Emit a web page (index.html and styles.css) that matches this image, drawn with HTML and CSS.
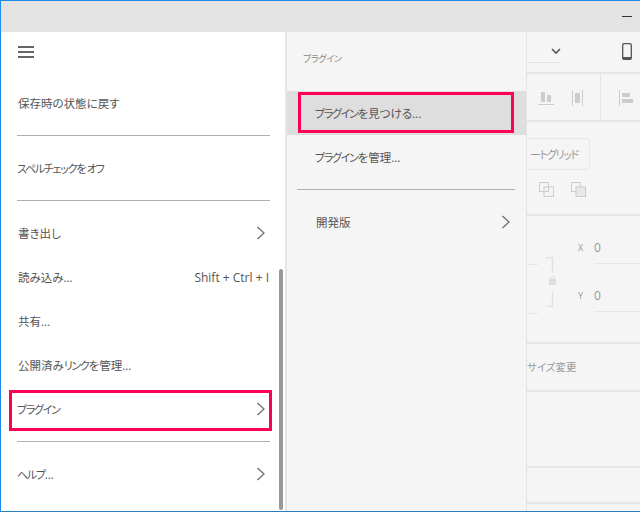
FILE: index.html
```html
<!DOCTYPE html>
<html lang="ja">
<head>
  <meta charset="UTF-8" />
  <title>プラグイン</title>
  <link rel="stylesheet" href="styles.css">
</head>
<body>
  <div class="window">
    <div class="titlebar"><span class="minimize"></span></div>

    <div class="main">
      <!-- main menu -->
      <div class="menu">
        <div class="burger">
          <svg width="16" height="12" viewBox="0 0 16 12"><path d="M0 1h16M0 6h16M0 11h16" stroke="#666" stroke-width="2"/></svg>
        </div>
        <div class="group first">
          <div class="item"><span>保存時の状態に戻す</span></div>
        </div>
        <div class="group">
          <div class="item"><span class="pull"><span class="kana">スペルチェック</span>を<span class="kana">オフ</span></span></div>
        </div>
        <div class="group">
          <div class="item"><span>書き出し</span> <svg class="arrow" width="9" height="14" viewBox="0 0 9 14"><path d="M1.500 1l6.500 6-6.500 6" fill="none" stroke="#777" stroke-width="1.500"/></svg></div>
          <div class="item"><span>読み込み<span class="dots">...</span></span> <span class="shortcut">Shift + Ctrl + I</span></div>
          <div class="item"><span>共有<span class="dots">...</span></span></div>
          <div class="item"><span>公開済み<span class="kana">リンク</span>を管理<span class="dots">...</span></span></div>
          <div class="item marked"><span class="kana pull">プラグイン</span> <svg class="arrow" width="9" height="14" viewBox="0 0 9 14"><path d="M1.500 1l6.500 6-6.500 6" fill="none" stroke="#777" stroke-width="1.500"/></svg></div>
        </div>
        <div class="group last">
          <div class="item"><span class="pull"><span class="kana">ヘルプ</span><span class="dots">...</span></span> <svg class="arrow" width="9" height="14" viewBox="0 0 9 14"><path d="M1.500 1l6.500 6-6.500 6" fill="none" stroke="#777" stroke-width="1.500"/></svg></div>
        </div>
        <div class="scrollbar"></div>
      </div>

      <!-- plugin submenu -->
      <div class="submenu">
        <div class="sub-title">プラグイン</div>
        <div class="sub-item active"><span><span class="kana">プラグイン</span>を見つける<span class="dots">...</span></span></div>
        <div class="sub-item"><span><span class="kana">プラグイン</span>を管理<span class="dots">...</span></span></div>
        <div class="sub-sep"></div>
        <div class="sub-item dev"><span>開発版</span> <svg class="arrow" width="9" height="14" viewBox="0 0 9 14"><path d="M1.500 1l6.500 6-6.500 6" fill="none" stroke="#777" stroke-width="1.500"/></svg></div>
      </div>

      <!-- property panel behind the menu -->
      <div class="panel">
        <div class="sec sec-top">
          <div class="select">
            <svg width="10" height="7" viewBox="0 0 10 7"><path d="M1 1l4 4 4-4" fill="none" stroke="#555" stroke-width="1.600"/></svg>
          </div>
          <svg class="phone" width="10" height="17" viewBox="0 0 10 17"><rect x="0.700" y="0.700" width="8.600" height="15.600" rx="1.200" fill="none" stroke="#555" stroke-width="1.300"/><path d="M1 14h8v2H1z" fill="#555"/></svg>
        </div>
        <div class="sec sec-align">
          <div class="align-left">
            <svg width="16" height="16" viewBox="0 0 16 16"><path d="M0 14.500h16" stroke="#ccc"/><path d="M3 2h4v10H3zM9 5h4v7H9z" fill="#ccc"/></svg>
            <svg width="11" height="16" viewBox="0 0 11 16"><path d="M.5 0v16M10.500 0v16" stroke="#ccc"/><path d="M3 3h5v10H3z" fill="#ccc"/></svg>
          </div>
          <div class="align-right">
            <svg width="14" height="16" viewBox="0 0 14 16"><path d="M.5 0v16" stroke="#ccc"/><path d="M3 3h8v4H3zM3 9h11v4H3z" fill="#ccc"/></svg>
          </div>
        </div>
        <div class="sec sec-grid">
          <div class="grid-btn"><span class="kana">ートグリッド</span></div>
          <div class="bool-icons">
            <svg width="15" height="15" viewBox="0 0 15 15"><rect x=".5" y=".5" width="9" height="9" fill="none" stroke="#ccc"/><rect x="5" y="5" width="9.500" height="9.500" fill="none" stroke="#ccc"/></svg>
            <svg width="15" height="15" viewBox="0 0 15 15"><rect x=".5" y=".5" width="9" height="9" fill="none" stroke="#ccc"/><rect x="5" y="5" width="9.500" height="9.500" fill="#e8e8e8" stroke="#ccc"/></svg>
          </div>
        </div>
        <div class="sec sec-pos">
          <div class="pos-lines">
            <div class="stub"></div>
            <div class="stub"></div>
          </div>
          <svg class="lock" width="12" height="50" viewBox="0 0 12 50"><path d="M0 .5h6.500V16M6.500 34v15.500H0" fill="none" stroke="#e2e2e2" stroke-width="1.500"/><path d="M3 22h7v6H3z" fill="#ddd"/><path d="M4.500 22v-2h4v2" fill="none" stroke="#ddd"/></svg>
          <div class="pos-fields">
            <div class="field"><span class="axis">X</span><span class="val">0</span></div>
            <div class="field"><span class="axis">Y</span><span class="val">0</span></div>
          </div>
        </div>
        <div class="sec sec-resize">サイズ変更</div>
        <div class="sec sec-a"></div>
        <div class="sec sec-b"></div>
      </div>
    </div>
  </div>
</body>
</html>
```

FILE: styles.css
```css
html, body {
  margin: 0;
  padding: 0;
}

body {
  width: 640px;
  height: 512px;
  overflow: hidden;
  font-family: "Noto Sans CJK JP", "Open Sans", sans-serif;
  font-feature-settings: "palt";
  font-size: 11.5px;
  color: #555;
}

.kana {
  font-size: 11px;
  letter-spacing: -1.3px;
}

.dots {
  font-size: 11px;
  letter-spacing: 0;
}

.pull {
  margin-left: -1px;
}

.window {
  width: 639px;
  height: 510px;
  border-top: 1px solid #1e8ae6;
  border-left: 1px solid #1e8ae6;
  border-bottom: 1px solid #2a7fc0;
  background-color: #f5f5f5;
  display: flex;
  flex-direction: column;
}

.titlebar {
  height: 31px;
  flex: none;
  background-color: #e3e3e3;
  display: flex;
  justify-content: flex-end;
  align-items: center;
  padding-right: 8px;
}

.minimize {
  width: 10px;
  height: 1px;
  background-color: #333;
}

.main {
  flex: 1;
  display: flex;
  min-height: 0;
}

/* ---- left menu ---- */
.menu {
  position: relative;
  width: 284px;
  flex: none;
  background-color: #fff;
  border-right: 2px solid #e6e6e6;
}

.burger {
  height: 39px;
  padding: 14px 0 0 17px;
  line-height: 0;
}

.group {
  margin: 0 15px 0 16px;
  border-bottom: 1px solid #b0b0b0;
  padding: 10px 0;
}

.group.first {
  margin-top: -14px;
}

.group.last {
  border-bottom: none;
}

.item {
  position: relative;
  height: 44px;
  display: flex;
  align-items: center;
  justify-content: space-between;
  padding: 0 5px 0 1px;
}

.marked::after {
  content: "";
  position: absolute;
  left: -8px;
  right: -2px;
  top: 3px;
  bottom: 0;
  border: 3px solid #ff0057;
}

.shortcut {
  font-family: "Open Sans", sans-serif;
  font-size: 12px;
  margin-right: -4px;
}

.arrow {
  flex: none;
}

.scrollbar {
  position: absolute;
  right: 2px;
  top: 237px;
  bottom: 1px;
  width: 4px;
  border-radius: 2px;
  background-color: #999;
}

/* ---- plugin submenu ---- */
.submenu {
  width: 239px;
  flex: none;
  background-color: #f5f5f5;
  border-right: 1px solid #e4e4e4;
}

.sub-title {
  height: 59px;
  padding: 20px 0 0 16px;
  box-sizing: border-box;
  font-size: 9px;
  line-height: 14px;
  letter-spacing: -0.3px;
  color: #888;
}

.sub-item {
  position: relative;
  height: 44px;
  padding: 0 16px 0 28px;
  display: flex;
  align-items: center;
  justify-content: space-between;
}

.sub-item.active {
  background-color: #dedede;
}

.sub-item.active::after {
  content: "";
  position: absolute;
  left: 11px;
  right: 12px;
  top: 1px;
  bottom: 2px;
  border: 3px solid #ff0057;
}

.sub-sep {
  height: 1px;
  background-color: #b0b0b0;
  margin: 10px 11px 10px 10px;
}

.sub-item.dev {
  padding-left: 29px;
}

/* ---- property panel ---- */
.panel {
  flex: 1;
  min-width: 0;
  display: flex;
  flex-direction: column;
  color: #aaa;
}

.sec {
  flex: none;
  box-sizing: border-box;
  border-bottom: 2px solid #e6e6e6;
}

.sec-top {
  height: 42px;
  display: flex;
  align-items: flex-start;
  justify-content: space-between;
  padding: 12px 8px 0 0;
}

.select {
  width: 34px;
  height: 19px;
  border-bottom: 1px solid #e2e2e2;
  display: flex;
  justify-content: flex-end;
  padding-top: 4px;
  box-sizing: border-box;
}

.phone {
  margin: -1px 0 0;
}

.sec-align {
  height: 48px;
  display: flex;
}

.align-left {
  width: 74px;
  border-right: 1px solid #e6e6e6;
  display: flex;
  gap: 18px;
  padding: 16px 0 0 11px;
  box-sizing: border-box;
}

.align-right {
  padding: 16px 0 0 18px;
}

.sec-grid {
  height: 94px;
  padding-top: 16px;
}

.grid-btn {
  width: 63px;
  height: 32px;
  box-sizing: border-box;
  border: 1px solid #e6e6e6;
  border-left: none;
  border-radius: 0 4px 4px 0;
  text-align: right;
  padding-right: 11px;
  line-height: 30px;
  white-space: nowrap;
  color: #999;
}

.bool-icons {
  display: flex;
  gap: 17px;
  padding: 12px 0 0 12px;
}

.sec-pos {
  height: 128px;
  display: flex;
}

.pos-lines {
  width: 11px;
  flex: none;
}

.stub {
  height: 48px;
  border-bottom: 1px solid #e6e6e6;
}

.lock {
  flex: none;
  margin: 41px 0 0 8px;
}

.pos-fields {
  flex: 1;
  padding-left: 27px;
}

.field {
  height: 48px;
  display: flex;
  align-items: center;
  padding-top: 16px;
  box-sizing: border-box;
  font-family: "Open Sans", sans-serif;
  font-size: 12px;
  color: #999;
  border-bottom: 1px solid #e6e6e6;
  margin-left: 9px;
}

.axis {
  font-size: 9px;
  width: 16px;
  margin-left: -16px;
}

.sec-resize {
  height: 48px;
  line-height: 46px;
  font-size: 10.5px;
  color: #999;
}

.sec-a {
  height: 76px;
}

.sec-b {
  height: 36px;
}
```
